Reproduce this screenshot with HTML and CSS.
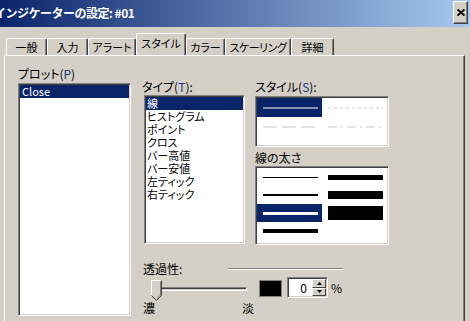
FILE: index.html
```html
<!DOCTYPE html>
<html lang="ja">
<head>
    <meta charset="UTF-8">
    <title>インジケーターの設定</title>
    <link rel="stylesheet" href="styles.css">
</head>
<body>
    <div class="window">
        <div class="titlebar">
            <span class="title">インジケーターの設定: #01</span>
            <span class="close-btn">
                <svg width="8" height="7" viewBox="0 0 8 7"><path d="M0.5 0.5 L7.5 6.5 M7.5 0.5 L0.5 6.5" stroke="#000" stroke-width="1.9"/></svg>
            </span>
        </div>

        <div class="tabs">
            <div class="tab w-general">一般</div>
            <div class="tab w-input">入力</div>
            <div class="tab w-alert">アラート</div>
            <div class="tab w-style active">スタイル</div>
            <div class="tab w-color">カラー</div>
            <div class="tab w-scale">スケーリング</div>
            <div class="tab w-detail">詳細</div>
        </div>

        <div class="panel">
            <!-- プロット -->
            <div class="plot-col">
                <div class="label">プロット(<span class="acc">P</span>)</div>
                <div class="listbox plot-list">
                    <div class="item selected">Close</div>
                </div>
            </div>

            <div class="right-area">
                <div class="upper">
                    <!-- タイプ -->
                    <div class="type-col">
                        <div class="label">タイプ(<span class="acc">T</span>):</div>
                        <div class="listbox type-list">
                            <div class="item selected">線</div>
                            <div class="item">ヒストグラム</div>
                            <div class="item">ポイント</div>
                            <div class="item">クロス</div>
                            <div class="item">バー高値</div>
                            <div class="item">バー安値</div>
                            <div class="item">左ティック</div>
                            <div class="item">右ティック</div>
                        </div>
                    </div>

                    <!-- スタイル / 線の太さ -->
                    <div class="style-col">
                        <div class="label">スタイル(<span class="acc">S</span>):</div>
                        <div class="listbox style-box">
                            <div class="cell selected">
                                <svg width="55" height="2"><line x1="0" y1="1" x2="55" y2="1" stroke="#fff" stroke-width="1"/></svg>
                            </div>
                            <div class="cell">
                                <svg width="55" height="2"><line x1="0" y1="1" x2="55" y2="1" stroke="#c8c8c8" stroke-width="1" stroke-dasharray="3 3"/></svg>
                            </div>
                            <div class="cell">
                                <svg width="55" height="2"><line x1="0" y1="1" x2="55" y2="1" stroke="#c8c8c8" stroke-width="1" stroke-dasharray="14 5"/></svg>
                            </div>
                            <div class="cell">
                                <svg width="55" height="2"><line x1="0" y1="1" x2="55" y2="1" stroke="#c8c8c8" stroke-width="1" stroke-dasharray="9 4 2 4"/></svg>
                            </div>
                        </div>

                        <div class="label width-label">線の太さ</div>
                        <div class="listbox width-box">
                            <div class="cell"><span class="bar" style="height: 1px"></span></div>
                            <div class="cell"><span class="bar" style="height: 5px"></span></div>
                            <div class="cell"><span class="bar" style="height: 2px"></span></div>
                            <div class="cell"><span class="bar" style="height: 8px"></span></div>
                            <div class="cell selected"><span class="bar" style="height: 3px"></span></div>
                            <div class="cell"><span class="bar" style="height: 14px"></span></div>
                            <div class="cell"><span class="bar" style="height: 4px"></span></div>
                            <div class="cell"></div>
                        </div>
                    </div>
                </div>

                <!-- 透過性 -->
                <div class="trans">
                    <div class="trans-head">
                        <span class="trans-label">透過性:</span>
                        <span class="etched"></span>
                    </div>
                    <div class="trans-row">
                        <div class="slider">
                            <div class="track"></div>
                            <svg class="thumb" width="11" height="21" viewBox="0 0 11 21">
                                <polygon points="0.5,0.5 10.5,0.5 10.5,15.5 5.5,20.5 0.5,15.5" fill="#d4d0c8"/>
                                <polyline points="0.5,15.5 0.5,0.5 10.5,0.5" fill="none" stroke="#fff"/>
                                <polyline points="10.5,0.5 10.5,15.5 5.5,20.5 0.5,15.5" fill="none" stroke="#404040"/>
                                <polyline points="9.5,1.5 9.5,15 5.5,19" fill="none" stroke="#808080"/>
                            </svg>
                        </div>
                        <div class="swatch"></div>
                        <div class="spin">
                            <div class="spin-val">0</div>
                            <div class="spin-btns">
                                <div class="spin-btn"><svg width="5" height="3"><polygon points="2.5,0 5,3 0,3" fill="#000"/></svg></div>
                                <div class="spin-btn"><svg width="5" height="3"><polygon points="0,0 5,0 2.5,3" fill="#000"/></svg></div>
                            </div>
                        </div>
                        <span class="pct">%</span>
                    </div>
                    <div class="trans-scale">
                        <span class="dense">濃</span>
                        <span>淡</span>
                    </div>
                </div>
            </div>
        </div>
    </div>
</body>
</html>
```

FILE: styles.css
```css
* {
    margin: 0;
    padding: 0;
    box-sizing: border-box;
}

body {
    width: 470px;
    height: 321px;
    overflow: hidden;
    background: #d4d0c8;
    font-family: "Noto Sans CJK JP", "Liberation Sans", sans-serif;
    font-size: 12px;
    line-height: 14px;
    color: #000;
    font-feature-settings: "palt";
}

/* タイトルバー */
.titlebar {
    height: 27px;
    background: linear-gradient(90deg, #0a246a 0%, #a6caf0 100%);
    display: flex;
    align-items: flex-start;
    justify-content: space-between;
}

.title {
    margin: 6px 0 0 -6px;
    color: #fff;
    font-weight: bold;
    font-size: 12px;
    letter-spacing: -0.5px;
    white-space: nowrap;
    font-feature-settings: normal;
}

.close-btn {
    width: 15px;
    height: 23px;
    margin: 1px 2px 0 0;
    background: #d4d0c8;
    border: 1px solid;
    border-color: #fff #404040 #404040 #fff;
    box-shadow: inset -1px -1px #808080;
    display: flex;
    align-items: center;
    justify-content: center;
}

/* タブ */
.tabs {
    display: flex;
    align-items: flex-end;
    height: 21px;
    margin-top: 7px;
    padding-left: 6px;
    font-size: 11px;
}

.tab {
    height: 17px;
    padding-top: 1px;
    text-align: center;
    white-space: nowrap;
    border-top: 1px solid #fff;
    border-left: 1px solid #fff;
    border-right: 1px solid #404040;
    border-top-left-radius: 2px;
    border-top-right-radius: 2px;
    box-shadow: inset -1px 0 #808080;
}

.tab.active {
    height: 22px;
    padding-top: 2px;
    position: relative;
    z-index: 1;
    background: #d4d0c8;
}

.w-general { width: 41px; }
.w-input { width: 41px; }
.w-alert { width: 48px; }
.w-style { width: 50px; }
.w-color { width: 39px; }
.w-scale { width: 66px; letter-spacing: -0.5px; }
.w-detail { width: 43px; }

/* パネル */
.panel {
    display: flex;
    height: 280px;
    margin: 0 5px 0 4px;
    padding: 11px 0 0 13px;
    border-top: 1px solid #fff;
    border-left: 1px solid #fff;
    border-right: 1px solid #404040;
    box-shadow: inset -1px 0 #808080;
}

.label {
    white-space: nowrap;
}

.acc {
    color: #1c3480;
}

.listbox {
    background: #fff;
    border: 1px solid;
    border-color: #808080 #fff #fff #808080;
    box-shadow: inset 1px 1px #404040, inset -1px -1px #d4d0c8;
    padding: 1px;
}

.item {
    height: 13px;
    font-size: 11px;
    line-height: 13px;
    padding-left: 1px;
    white-space: nowrap;
}

.item.selected {
    background: #0a246a;
    color: #fff;
}

.plot-col {
    width: 113px;
}

.plot-list {
    margin-top: 2px;
    height: 233px;
}

.plot-list .item {
    padding-left: 2px;
}

.right-area {
    margin: 13px 0 0 11px;
}

.upper {
    display: flex;
    gap: 10px;
    height: 165px;
}

.type-col {
    width: 103px;
}

.type-list {
    margin: 1px 0 0 2px;
    width: 101px;
    height: 149px;
}

.style-col {
    width: 134px;
}

.style-box {
    margin-top: 2px;
    height: 51px;
    display: grid;
    grid-template-columns: 65px 65px;
    grid-auto-rows: 19px;
}

.width-label {
    margin-top: 4px;
}

.width-box {
    margin-top: 1px;
    height: 79px;
    display: grid;
    grid-template-columns: 65px 65px;
    grid-auto-rows: 18px;
}

.cell {
    display: flex;
    align-items: center;
    padding: 0 4px 0 6px;
}

.cell svg {
    display: block;
}

.cell.selected {
    background: #0a246a;
}

.bar {
    display: block;
    width: 55px;
    background: #000;
}

.cell.selected .bar {
    background: #fff;
}

/* 透過性 */
.trans {
    margin: 17px 0 0 1px;
}

.trans-head {
    display: flex;
    align-items: center;
    height: 14px;
}

.trans-label {
    width: 85px;
}

.etched {
    width: 115px;
    height: 2px;
    border-top: 1px solid #808080;
    border-bottom: 1px solid #fff;
}

.trans-row {
    display: flex;
    align-items: flex-start;
    height: 24px;
    margin-top: 1px;
}

.slider {
    position: relative;
    width: 116px;
    height: 24px;
}

.track {
    width: 95px;
    height: 4px;
    margin: 10px 0 0 9px;
    border: 1px solid;
    border-color: #808080 #fff #fff #808080;
    box-shadow: inset 1px 1px #404040;
}

.thumb {
    position: absolute;
    left: 8px;
    top: 3px;
}

.swatch {
    width: 23px;
    height: 17px;
    margin-top: 3px;
    background: #000;
    border: 1px solid #808080;
}

.spin {
    display: flex;
    width: 41px;
    height: 21px;
    margin-left: 5px;
    background: #fff;
    border: 1px solid;
    border-color: #808080 #fff #fff #808080;
    box-shadow: inset 1px 1px #404040, inset -1px -1px #d4d0c8;
    padding: 1px;
}

.spin-val {
    flex: 1;
    text-align: right;
    padding-right: 5px;
    line-height: 17px;
}

.spin-btns {
    width: 14px;
    display: flex;
    flex-direction: column;
}

.spin-btn {
    flex: 1;
    background: #d4d0c8;
    border: 1px solid;
    border-color: #fff #404040 #404040 #fff;
    display: flex;
    align-items: center;
    justify-content: center;
}

.spin-btn svg {
    display: block;
}

.pct {
    margin: 4px 0 0 3px;
}

.trans-scale {
    display: flex;
    height: 14px;
}

.dense {
    width: 99px;
}
```
